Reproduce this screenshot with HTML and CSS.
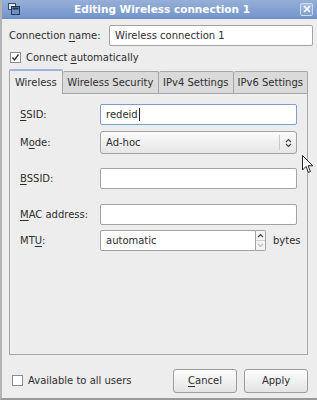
FILE: index.html
```html
<!DOCTYPE html>
<html lang="en">
<head>
  <meta charset="utf-8">
  <title>Editing Wireless connection 1</title>
  <link rel="stylesheet" href="styles.css">
</head>
<body>
  <div class="window">
    <div class="titlebar">
      <svg class="titlebar__icon" width="12" height="12" viewBox="0 0 12 12">
        <rect x="0.5" y="0.5" width="7" height="6" fill="#dfe6f2" stroke="#3a4a66"/>
        <rect x="3.5" y="3.5" width="8" height="8" fill="#6f8fc4" stroke="#2a3a56"/>
        <rect x="4.5" y="4.5" width="6" height="2" fill="#233452"/>
      </svg>
      <span class="titlebar__title">Editing Wireless connection 1</span>
      <span class="titlebar__close">
        <svg width="8" height="8" viewBox="0 0 8 8"><path d="M1 1L7 7M7 1L1 7" stroke="#fff" stroke-width="1.6"/></svg>
      </span>
    </div>

    <div class="content">
      <div class="row row-name">
        <label class="label label-name">Connection <u>n</u>ame:</label>
        <div class="entry entry-name">Wireless connection 1</div>
      </div>

      <div class="check">
        <span class="check__box check__box-on">
          <svg width="9" height="9" viewBox="0 0 9 9"><path d="M1.5 4.5L3.5 7L7.5 1.5" fill="none" stroke="#333" stroke-width="1.3"/></svg>
        </span>
        <span>Connect <u>a</u>utomatically</span>
      </div>

      <div class="notebook">
        <div class="tabs">
          <span class="tab tab-active">Wireless</span>
          <span class="tab tab-security">Wireless Security</span>
          <span class="tab tab-ip">IPv4 Settings</span>
          <span class="tab tab-ip">IPv6 Settings</span>
        </div>
        <div class="panel">
          <div class="field">
            <span class="label"><u>S</u>SID:</span>
            <div class="entry entry-focus">redeid<span class="caret"></span></div>
          </div>
          <div class="field field-mode">
            <span class="label">M<u>o</u>de:</span>
            <div class="combo">
              <span class="combo__text">Ad-hoc</span>
              <span class="combo__arrow">
                <svg width="7" height="10" viewBox="0 0 7 10"><path d="M1 4L3.5 1.5L6 4M1 6L3.5 8.5L6 6" fill="none" stroke="#444" stroke-width="1.1"/></svg>
              </span>
            </div>
          </div>
          <div class="field field-bssid">
            <span class="label"><u>B</u>SSID:</span>
            <div class="entry"></div>
          </div>
          <div class="field field-mac">
            <span class="label"><u>M</u>AC address:</span>
            <div class="entry"></div>
          </div>
          <div class="field field-mtu">
            <span class="label">MT<u>U</u>:</span>
            <div class="spin">
              <div class="entry entry-spin">automatic</div>
              <div class="spin__buttons">
                <span class="spin__up"><svg width="7" height="5" viewBox="0 0 7 5"><path d="M1 4L3.5 1.5L6 4" fill="none" stroke="#444" stroke-width="1.1"/></svg></span>
                <span class="spin__down"><svg width="7" height="5" viewBox="0 0 7 5"><path d="M1 1L3.5 3.5L6 1" fill="none" stroke="#bbb" stroke-width="1.1"/></svg></span>
              </div>
            </div>
            <span class="unit">bytes</span>
          </div>
        </div>
      </div>

      <div class="footer">
        <div class="check check-footer">
          <span class="check__box"></span>
          <span>Available to all users</span>
        </div>
        <div class="buttons">
          <button class="button"><u>C</u>ancel</button>
          <button class="button">Apply</button>
        </div>
      </div>
    </div>

    <svg class="pointer" width="12" height="20" viewBox="0 0 12 20">
      <path d="M0.5 0.5L0.5 15L4 11.5L6.5 17.5L8.5 16.5L6 10.8L10.8 10.8Z" fill="#fff" stroke="#222" stroke-width="1"/>
    </svg>
  </div>
</body>
</html>
```

FILE: styles.css
```css
* {
  box-sizing: border-box;
}

html, body {
  margin: 0;
  padding: 0;
}

body {
  width: 317px;
  height: 400px;
  overflow: hidden;
  font-family: "DejaVu Sans", sans-serif;
  font-size: 10px;
  color: #2e2e2e;
  background: #ededed;
  white-space: nowrap;
}

u {
  text-decoration-thickness: 1px;
  text-underline-offset: 2px;
}

.window {
  position: relative;
  width: 317px;
  height: 400px;
  border-left: 2px solid #b4b4b4;
  border-bottom: 2px solid #9a9a9a;
  background: #ededed;
  display: flex;
  flex-direction: column;
}

.titlebar {
  height: 19px;
  display: flex;
  align-items: center;
  padding: 0 4px 0 6px;
  background: linear-gradient(#96afd8, #7495cb);
  border-bottom: 1px solid #6d8cbf;
  color: #fff;
}

.titlebar__icon {
  flex: none;
}

.titlebar__title {
  flex: 1;
  text-align: center;
  font-weight: bold;
  font-size: 10.5px;
  padding-left: 4px;
}

.titlebar__close {
  width: 13px;
  height: 13px;
  border: 1px solid #cfdcef;
  border-radius: 2px;
  display: flex;
  align-items: center;
  justify-content: center;
  background: linear-gradient(#a7bde0, #7f9dcf);
}

.content {
  flex: 1;
  display: flex;
  flex-direction: column;
  padding: 6px 4px 0 7px;
}

.row {
  display: flex;
  align-items: center;
}

.label-name {
  width: 100px;
  flex: none;
}

.entry {
  height: 21px;
  flex: 1;
  display: flex;
  align-items: center;
  padding: 0 5px;
  background: #fff;
  border: 1px solid #a3a3a3;
  border-radius: 2px;
  color: #2e2e2e;
}

.entry-focus {
  border-color: #7d9cd0;
}

.caret {
  display: inline-block;
  width: 1px;
  height: 13px;
  margin-left: 1px;
  background: #222;
}

.check {
  display: flex;
  align-items: center;
  gap: 5px;
  margin-top: 6px;
  padding-left: 1px;
}

.check__box {
  width: 11px;
  height: 11px;
  flex: none;
  display: flex;
  align-items: center;
  justify-content: center;
  background: #fff;
  border: 1px solid #8c8c8c;
}

.notebook {
  margin-top: 7px;
  margin-right: 5px;
}

.tabs {
  display: flex;
  height: 23px;
  align-items: flex-end;
}

.tab {
  height: 22px;
  display: flex;
  align-items: center;
  justify-content: center;
  border: 1px solid #a6a6a6;
  border-bottom: none;
  border-left: none;
  border-radius: 2px 2px 0 0;
  background: #dadada;
}

.tab-active {
  width: 54px;
  height: 25px;
  margin-bottom: -1px;
  border-left: 1px solid #a6a6a6;
  border-top: 2px solid #9db4dc;
  background: #ededed;
  position: relative;
  z-index: 1;
}

.tab-security {
  width: 97px;
}

.tab-ip {
  width: 75px;
}

.panel {
  height: 262px;
  border: 1px solid #a6a6a6;
  padding: 10px 10px 0 10px;
  display: flex;
  flex-direction: column;
}

.field {
  display: flex;
  align-items: center;
  height: 21px;
}

.field .label {
  width: 80px;
  flex: none;
}

.field-mode {
  margin-top: 6px;
  height: 23px;
}

.field-bssid {
  margin-top: 14px;
}

.field-mac {
  margin-top: 15px;
}

.field-mtu {
  margin-top: 5px;
}

.combo {
  flex: 1;
  height: 23px;
  display: flex;
  align-items: center;
  border: 1px solid #a3a3a3;
  border-radius: 3px;
  background: linear-gradient(#fbfbfb, #e6e6e6);
}

.combo__text {
  flex: 1;
  padding-left: 5px;
}

.combo__arrow {
  width: 17px;
  height: 15px;
  border-left: 1px solid #c8c8c8;
  display: flex;
  align-items: center;
  justify-content: center;
}

.spin {
  width: 166px;
  flex: none;
  display: flex;
}

.entry-spin {
  border-radius: 2px 0 0 2px;
}

.spin__buttons {
  width: 10px;
  display: flex;
  flex-direction: column;
  border: 1px solid #a3a3a3;
  border-left: none;
  border-radius: 0 2px 2px 0;
  background: #f4f4f4;
}

.spin__up, .spin__down {
  flex: 1;
  display: flex;
  align-items: center;
  justify-content: center;
}

.spin__up {
  border-bottom: 1px solid #d0d0d0;
}

.unit {
  margin-left: 7px;
}

.footer {
  flex: 1;
  display: flex;
  align-items: center;
  justify-content: space-between;
  padding: 8px 5px 0 2px;
}

.check-footer {
  margin-top: 0;
}

.buttons {
  display: flex;
  gap: 7px;
}

.button {
  width: 64px;
  height: 24px;
  font-family: inherit;
  font-size: 10px;
  color: #2e2e2e;
  border: 1px solid #9c9c9c;
  border-radius: 3px;
  background: linear-gradient(#fdfdfd, #e4e4e4);
  padding: 0;
}

.pointer {
  position: absolute;
  left: 300px;
  top: 155px;
}
```
